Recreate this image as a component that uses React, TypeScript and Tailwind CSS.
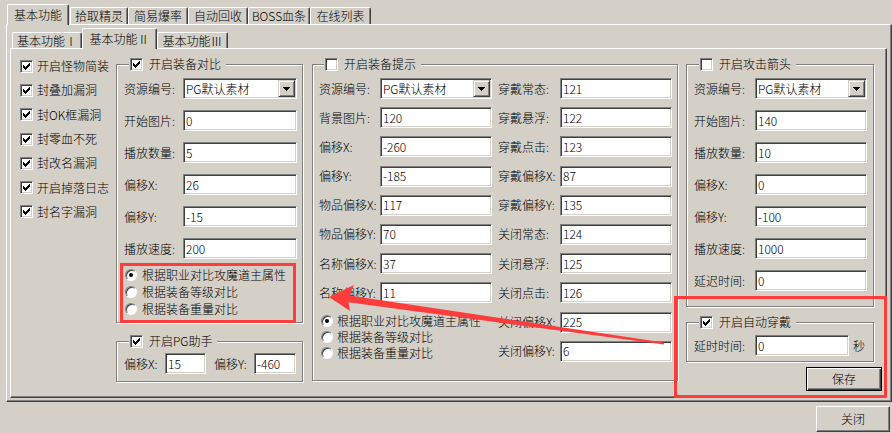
import React from "react";

const sunk =
  "border border-t-[#808080] border-l-[#808080] border-r-white border-b-white shadow-[inset_1px_1px_0_#404040,inset_-1px_-1px_0_#d4d0c8]";

const CHECK =
  "M6 0h1v1h-1z M5 1h2v1h-2z M0 2h1v1h-1z M4 2h3v1h-3z M0 3h2v1h-2z M3 3h3v1h-3z M0 4h5v1h-5z M1 5h3v1h-3z M2 6h1v1h-1z";

const Check = ({ on = false }: { on?: boolean }) => (
  <span className={`flex h-[13px] w-[13px] shrink-0 items-center justify-center bg-white ${sunk}`}>
    {on && (
      <svg width="7" height="7" viewBox="0 0 7 7" shapeRendering="crispEdges">
        <path d={CHECK} fill="#000" />
      </svg>
    )}
  </span>
);

const Radio = ({ on = false }: { on?: boolean }) => (
  <span className="flex h-[12px] w-[12px] shrink-0 items-center justify-center rounded-full border border-t-[#808080] border-l-[#808080] border-r-white border-b-white bg-white shadow-[inset_1px_1px_0_#404040]">
    {on && <span className="h-[4px] w-[4px] rounded-full bg-black" />}
  </span>
);

const Box = ({ value, className = "" }: { value: string; className?: string }) => (
  <div className={`flex h-[21px] items-center bg-white pl-[2px] ${sunk} ${className}`}>{value}</div>
);

const Combo = ({ className = "" }: { className?: string }) => (
  <div className={`flex h-[21px] items-center bg-white pl-[2px] pr-[1px] ${sunk} ${className}`}>
    <span className="flex-1 whitespace-nowrap">PG默认素材</span>
    <span className="flex h-[17px] w-[17px] items-center justify-center border border-t-[#d4d0c8] border-l-[#d4d0c8] border-r-[#404040] border-b-[#404040] bg-[#d4d0c8] shadow-[inset_1px_1px_0_#fff,inset_-1px_-1px_0_#808080]">
      <svg width="7" height="4" viewBox="0 0 7 4" shapeRendering="crispEdges">
        <path d="M0 0h7v1h-1v1h-1v1h-1v1h-1v-1h-1v-1h-1v-1h-1z" fill="#000" />
      </svg>
    </span>
  </div>
);

const Row = ({ label, lw, children }: { label: string; lw: string; children: React.ReactNode }) => (
  <div className="flex items-center">
    <span className={`shrink-0 whitespace-nowrap ${lw}`}>{label}</span>
    {children}
  </div>
);

const Group = ({
  title,
  on = false,
  className = "",
  children,
}: {
  title: string;
  on?: boolean;
  className?: string;
  children: React.ReactNode;
}) => (
  <fieldset className={`border border-[#808080] shadow-[inset_1px_1px_0_#fff,1px_1px_0_#fff] ${className}`}>
    <legend className="ml-[5px] bg-[#d4d0c8] pl-[1px] pr-[5px]">
      <span className="flex h-[14px] items-center gap-[6px]">
        <Check on={on} />
        <span className="whitespace-nowrap">{title}</span>
      </span>
    </legend>
    {children}
  </fieldset>
);

const Tab = ({ label, active = false, className = "" }: { label: string; active?: boolean; className?: string }) => (
  <div
    className={`flex shrink-0 items-center justify-center whitespace-nowrap rounded-t-[2px] border-l border-t border-r border-l-white border-t-white border-r-[#404040] bg-[#d4d0c8] shadow-[inset_-1px_0_0_#808080] ${
      active ? "relative z-10 -mb-[1px]" : ""
    } ${className}`}
  >
    {label}
  </div>
);

const sideChecks = ["开启怪物简装", "封叠加漏洞", "封OK框漏洞", "封零血不死", "封改名漏洞", "开启掉落日志", "封名字漏洞"];

const radios = ["根据职业对比攻魔道主属性", "根据装备等级对比", "根据装备重量对比"];

const compareRows = [
  ["开始图片:", "0"],
  ["播放数量:", "5"],
  ["偏移X:", "26"],
  ["偏移Y:", "-15"],
  ["播放速度:", "200"],
];

const tipLeft = [
  ["背景图片:", "120"],
  ["偏移X:", "-260"],
  ["偏移Y:", "-185"],
  ["物品偏移X:", "117"],
  ["物品偏移Y:", "70"],
  ["名称偏移X:", "37"],
  ["名称偏移Y:", "11"],
];

const tipRight = [
  ["穿戴常态:", "121"],
  ["穿戴悬浮:", "122"],
  ["穿戴点击:", "123"],
  ["穿戴偏移X:", "87"],
  ["穿戴偏移Y:", "135"],
  ["关闭常态:", "124"],
  ["关闭悬浮:", "125"],
  ["关闭点击:", "126"],
  ["关闭偏移X:", "225"],
  ["关闭偏移Y:", "6"],
];

const arrowRows = [
  ["开始图片:", "140"],
  ["播放数量:", "10"],
  ["偏移X:", "0"],
  ["偏移Y:", "-100"],
  ["播放速度:", "1000"],
  ["延迟时间:", "0"],
];

export default function App() {
  return (
    <div className="relative h-[433px] w-[892px] overflow-hidden bg-[#d4d0c8] font-['Noto_Sans_CJK_SC',sans-serif] text-[12px] font-light leading-[14px] text-black">
      {/* main tabs */}
      <div className="flex h-[24px] items-end pl-[7px]">
        <Tab label="基本功能" active className="h-[21px] w-[62px]" />
        <Tab label="拾取精灵" className="ml-[1px] h-[17px] w-[58px]" />
        <Tab label="简易爆率" className="h-[17px] w-[60px]" />
        <Tab label="自动回收" className="h-[17px] w-[60px]" />
        <Tab label="BOSS血条" className="h-[17px] w-[62px]" />
        <Tab label="在线列表" className="h-[17px] w-[61px]" />
      </div>

      <div className="ml-[6px] flex h-[378px] w-[886px] flex-col border border-t-white border-l-white border-r-[#404040] border-b-[#404040] pl-[3px] shadow-[inset_-1px_-1px_0_#808080]">
        {/* sub tabs */}
        <div className="flex h-[23px] items-end pl-[2px]">
          <Tab label="基本功能Ⅰ" className="h-[16px] w-[70px]" />
          <Tab label="基本功能Ⅱ" active className="h-[21px] w-[75px]" />
          <Tab label="基本功能Ⅲ" className="h-[16px] w-[71px]" />
        </div>

        <div className="flex h-[350px] w-[877px] border border-t-white border-l-white border-r-[#404040] border-b-[#404040] pl-[9px] pt-[8px] shadow-[inset_-1px_-1px_0_#808080]">
          {/* column 1 */}
          <div className="-mt-[3px] flex w-[96px] shrink-0 flex-col">
            {sideChecks.map((t) => (
              <div key={t} className="flex h-[24.3px] items-center gap-[4px]">
                <Check on />
                <span className="whitespace-nowrap">{t}</span>
              </div>
            ))}
          </div>

          {/* column 2 */}
          <div className="flex w-[187px] shrink-0 flex-col">
            <Group title="开启装备对比" on className="w-[187px] pb-[5px] pl-[7px] pr-[5px]">
              <div className="flex flex-col gap-[11px] pt-[7px]">
                <Row label="资源编号:" lw="w-[59px]">
                  <Combo className="w-[114px]" />
                </Row>
                {compareRows.map(([l, v]) => (
                  <Row key={l} label={l} lw="w-[59px]">
                    <Box value={v} className="w-[114px]" />
                  </Row>
                ))}
              </div>
              <div className="mt-[7px] flex flex-col">
                {radios.map((t, i) => (
                  <div key={t} className="flex h-[17px] items-center gap-[5px] pl-[1px]">
                    <Radio on={i === 0} />
                    <span className="whitespace-nowrap">{t}</span>
                  </div>
                ))}
              </div>
            </Group>

            <Group title="开启PG助手" on className="mt-[11px] w-[187px] pb-[7px] pl-[7px]">
              <div className="flex items-center pt-[5px]">
                <span className="w-[41px] shrink-0 whitespace-nowrap">偏移X:</span>
                <Box value="15" className="w-[41px]" />
                <span className="ml-[8px] w-[40px] shrink-0 whitespace-nowrap">偏移Y:</span>
                <Box value="-460" className="w-[42px]" />
              </div>
            </Group>
          </div>

          {/* column 3 */}
          <Group title="开启装备提示" className="ml-[9px] h-fit w-[366px] shrink-0 pb-[18px] pl-[6px] pr-[5px]">
            <div className="flex items-start gap-[6px] pt-[7px]">
              <div className="flex w-[173px] flex-col">
                <div className="flex flex-col gap-[8.2px]">
                  <Row label="资源编号:" lw="w-[61px]">
                    <Combo className="w-[112px]" />
                  </Row>
                  {tipLeft.map(([l, v]) => (
                    <Row key={l} label={l} lw="w-[61px]">
                      <Box value={v} className="w-[112px]" />
                    </Row>
                  ))}
                </div>
                <div className="mt-[9.5px] flex flex-col">
                  {radios.map((t, i) => (
                    <div key={t} className="flex h-[16px] items-center gap-[4px] pl-[2px]">
                      <Radio on={i === 0} />
                      <span className="whitespace-nowrap">{t}</span>
                    </div>
                  ))}
                </div>
              </div>
              <div className="flex w-[174px] flex-col gap-[8.2px]">
                {tipRight.map(([l, v]) => (
                  <Row key={l} label={l} lw="w-[62px]">
                    <Box value={v} className="w-[112px]" />
                  </Row>
                ))}
              </div>
            </div>
          </Group>

          {/* column 4 */}
          <div className="ml-[8px] flex w-[196px] shrink-0 flex-col items-start">
            <Group title="开启攻击箭头" className="w-[188px] pb-[15px] pl-[7px] pr-[6px]">
              <div className="flex flex-col gap-[11px] pt-[7px]">
                <Row label="资源编号:" lw="w-[61px]">
                  <Combo className="w-[112px]" />
                </Row>
                {arrowRows.map(([l, v]) => (
                  <Row key={l} label={l} lw="w-[61px]">
                    <Box value={v} className="w-[112px]" />
                  </Row>
                ))}
              </div>
            </Group>

            <Group title="开启自动穿戴" on className="mt-[8px] w-[188px] pb-[5px] pl-[7px]">
              <div className="flex items-center pt-[6px]">
                <span className="w-[61px] shrink-0 whitespace-nowrap">延时时间:</span>
                <Box value="0" className="w-[94px]" />
                <span className="ml-[4px]">秒</span>
              </div>
            </Group>

            <button className="mt-[5px] flex h-[24px] w-[76px] items-center justify-center self-end border border-black shadow-[inset_1px_1px_0_#fff,inset_-1px_-1px_0_#404040,inset_-2px_-2px_0_#808080]">
              保存
            </button>
          </div>
        </div>
      </div>

      <div className="mt-[4px] flex justify-end pr-[2px]">
        <button className="flex h-[26px] w-[74px] items-center justify-center border border-t-white border-l-white border-r-[#404040] border-b-[#404040] shadow-[inset_-1px_-1px_0_#808080]">
          关闭
        </button>
      </div>

      {/* red annotations */}
      <svg className="pointer-events-none absolute left-0 top-0" width="892" height="433">
        <rect x="121.5" y="264.5" width="173" height="57" fill="none" stroke="#ff3c3c" strokeWidth="3" />
        <rect x="675.5" y="297.5" width="210" height="99" fill="none" stroke="#ff3c3c" strokeWidth="3" />
        <polygon points="346,295 664,342.5 664,344.5 346,302" fill="#ff3c3c" />
        <polygon points="329,297 354,285 348,299 350,311" fill="#ff3c3c" />
      </svg>
    </div>
  );
}
